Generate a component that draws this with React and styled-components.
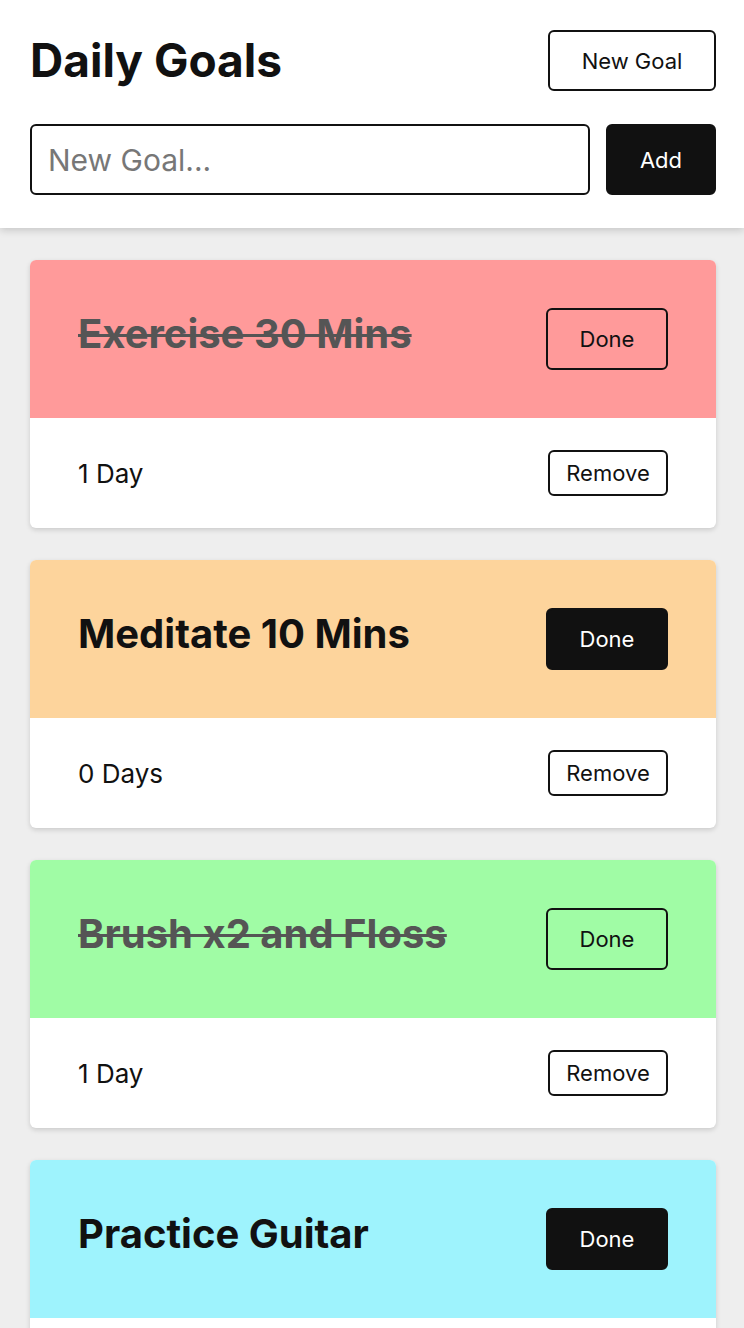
import React, { useState } from 'react'
import styled, { createGlobalStyle } from 'styled-components'

const GlobalStyle = createGlobalStyle`
  html, body {
    margin: 0;
    padding: 0;
    background: #eeeeee;
    font-family: Inter, "Noto Sans", sans-serif;
    color: #111;
  }
  * { box-sizing: border-box; }
`

const Header = styled.header`
  background: #fff;
  padding: 30px 28px 33px 30px;
  box-shadow: 0 2px 8px rgba(0, 0, 0, 0.18);
  position: relative;
  z-index: 1;
`
const TopRow = styled.div`
  display: flex;
  justify-content: space-between;
  align-items: center;
  margin-bottom: 33px;
`
const Title = styled.h1`
  margin: 0;
  font-size: 46px;
  font-weight: 700;
  line-height: 1.2;
`
const Button = styled.button`
  font-family: inherit;
  font-size: 22px;
  line-height: 1;
  border: 2px solid #111;
  border-radius: 6px;
  background: ${(p) => (p.filled ? '#111' : p.clear ? 'transparent' : '#fff')};
  color: ${(p) => (p.filled ? '#fff' : '#111')};
  width: ${(p) => p.w}px;
  height: ${(p) => p.h}px;
  padding: 0;
  cursor: pointer;
`
const AddRow = styled.div`
  display: flex;
  gap: 16px;
`
const Input = styled.input`
  flex: 1;
  height: 71px;
  border: 2px solid #111;
  border-radius: 6px;
  font-family: inherit;
  font-size: 30px;
  padding: 0 16px;
  &::placeholder { color: #777; }
`
const List = styled.div`
  display: flex;
  flex-direction: column;
  gap: 32px;
  padding: 32px 28px 32px 30px;
`
const Card = styled.div`
  background: #fff;
  border-radius: 6px;
  overflow: hidden;
  box-shadow: 0 2px 5px rgba(0, 0, 0, 0.15);
`
const CardTop = styled.div`
  background: ${(p) => p.color};
  display: flex;
  justify-content: space-between;
  align-items: center;
  height: 158px;
  padding: 0 48px;
`
const GoalName = styled.h2`
  margin: 0 0 10px;
  font-size: 40px;
  line-height: 1.2;
  font-weight: 700;
  color: ${(p) => (p.done ? '#555' : '#111')};
  text-decoration: ${(p) => (p.done ? 'line-through' : 'none')};
  text-decoration-thickness: 3px;
`
const CardBottom = styled.div`
  display: flex;
  justify-content: space-between;
  align-items: center;
  height: 110px;
  padding: 0 48px;
`
const Streak = styled.span`
  font-size: 26px;
`

const initialGoals = [
  { name: 'Exercise 30 Mins', color: '#ff9a9a', done: true, days: 1 },
  { name: 'Meditate 10 Mins', color: '#fdd49c', done: false, days: 0 },
  { name: 'Brush x2 and Floss', color: '#a0fca5', done: true, days: 1 },
  { name: 'Practice Guitar', color: '#9ef3fd', done: false, days: 0 },
]

export default function App() {
  const [goals, setGoals] = useState(initialGoals)
  const [text, setText] = useState('')

  const toggle = (i) =>
    setGoals(goals.map((g, j) => (j === i ? { ...g, done: !g.done } : g)))

  return (
    <>
      <GlobalStyle />
      <Header>
        <TopRow>
          <Title>Daily Goals</Title>
          <Button w={168} h={61}>New Goal</Button>
        </TopRow>
        <AddRow>
          <Input
            placeholder="New Goal..."
            value={text}
            onChange={(e) => setText(e.target.value)}
          />
          <Button filled w={110} h={71}>Add</Button>
        </AddRow>
      </Header>
      <List>
        {goals.map((g, i) => (
          <Card key={g.name}>
            <CardTop color={g.color}>
              <GoalName done={g.done}>{g.name}</GoalName>
              <Button
                filled={!g.done}
                clear={g.done}
                w={122}
                h={62}
                onClick={() => toggle(i)}
              >
                Done
              </Button>
            </CardTop>
            <CardBottom>
              <Streak>{g.days === 1 ? '1 Day' : `${g.days} Days`}</Streak>
              <Button w={120} h={46}>Remove</Button>
            </CardBottom>
          </Card>
        ))}
      </List>
    </>
  )
}
